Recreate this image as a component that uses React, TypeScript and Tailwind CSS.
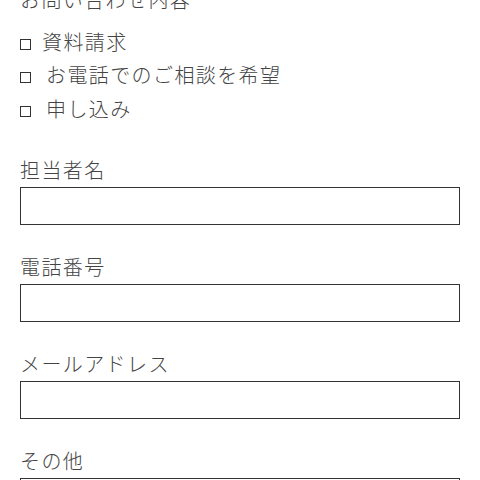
const font = { fontFamily: '"Noto Sans CJK JP", "Noto Sans", sans-serif' }

const options = [
  { label: '資料請求', gap: 'ml-[11px]' },
  { label: 'お電話でのご相談を希望', gap: 'ml-[15px]' },
  { label: '申し込み', gap: 'ml-[15px]' },
]

const fields = ['担当者名', '電話番号', 'メールアドレス']

function Box() {
  return <span className="mt-[5px] block h-[11px] w-[11px] shrink-0 border-[1.5px] border-[#333]" />
}

export default function App() {
  return (
    <div className="h-[480px] w-[480px] overflow-hidden bg-white text-[#444]" style={font}>
      <div className="-mt-[14px] px-5">
        <p className="text-[20px] font-light leading-[28px] tracking-[1.4px]">お問い合わせ内容</p>

        <ul className="mt-[11px]">
          {options.map((o) => (
            <li key={o.label} className="flex h-[33.5px] items-center">
              <Box />
              <span className={`${o.gap} text-[20px] font-light leading-[28px] tracking-[1.4px]`}>{o.label}</span>
            </li>
          ))}
        </ul>

        <div className="mt-[30px]">
          {fields.map((f) => (
            <div key={f} className="mb-[28px]">
              <label className="block text-[20px] font-light leading-[28px] tracking-[1.4px]">{f}</label>
              <input className="mt-[3px] block h-[38px] w-full border-[1.5px] border-[#333] bg-white outline-none" />
            </div>
          ))}
          <div>
            <label className="block text-[20px] font-light leading-[28px] tracking-[1.4px]">その他</label>
            <textarea className="mt-[3px] block h-[120px] w-full resize-none border-[1.5px] border-[#333] bg-white outline-none" />
          </div>
        </div>
      </div>
    </div>
  )
}
